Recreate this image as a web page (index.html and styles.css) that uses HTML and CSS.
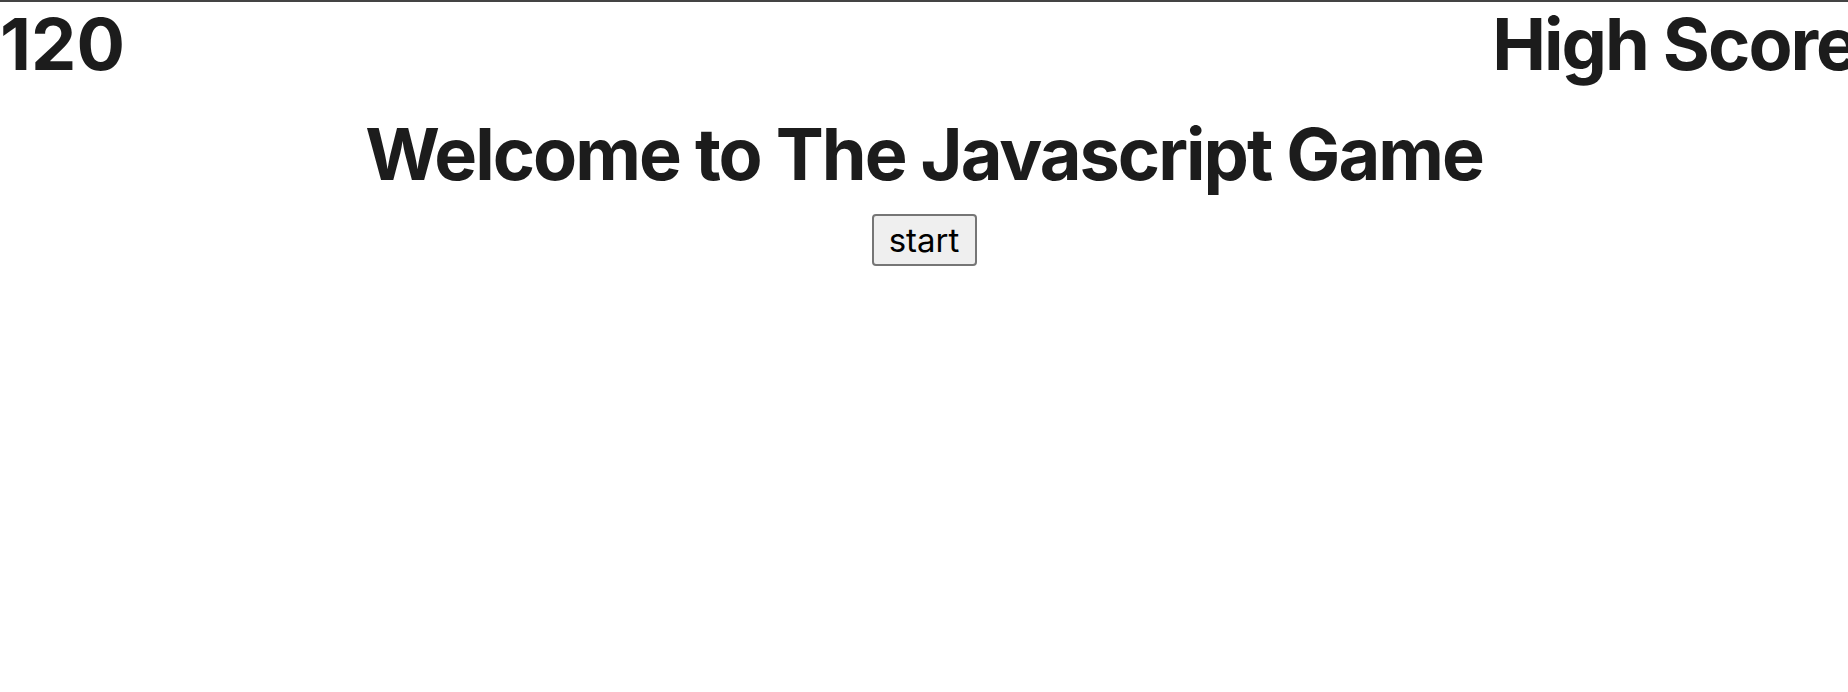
FILE: index.html
```html
<!DOCTYPE html>
<html>
<head>
<meta charset="utf-8">
<link rel="stylesheet" href="styles.css">
</head>
<body>
<div class="page">
  <div class="scorebar">
    <div class="score">120</div>
    <div class="high">High Score</div>
  </div>
  <h1 class="title">Welcome to The Javascript Game</h1>
  <div class="actions">
    <button class="start">start</button>
  </div>
</div>
</body>
</html>
```
FILE: styles.css
```css
html, body {
  margin: 0;
  padding: 0;
  background: #ffffff;
  overflow: hidden;
}
body {
  font-family: Inter, "Noto Sans", sans-serif;
  color: #1c1c1c;
  border-top: 2px solid #444444;
}
.page {
  display: flex;
  flex-direction: column;
  align-items: center;
}
.scorebar {
  display: flex;
  justify-content: space-between;
  width: calc(100% + 9px);
  align-self: flex-start;
  font-size: 72px;
  font-weight: 700;
  line-height: 72px;
  padding-top: 6px;
}
.score {
  letter-spacing: 0;
}
.high {
  letter-spacing: -2px;
}
.title {
  margin: 38px 0 0 0;
  font-size: 72px;
  font-weight: 700;
  line-height: 72px;
  letter-spacing: -2px;
  text-align: center;
}
.actions {
  margin-top: 24px;
}
.start {
  font-family: Inter, "Noto Sans", sans-serif;
  font-size: 33px;
  color: #000;
  background: #efefef;
  border: 2px solid #767676;
  border-radius: 4px;
  padding: 1px 10px;
  height: 52px;
  width: 105px;
}
```
